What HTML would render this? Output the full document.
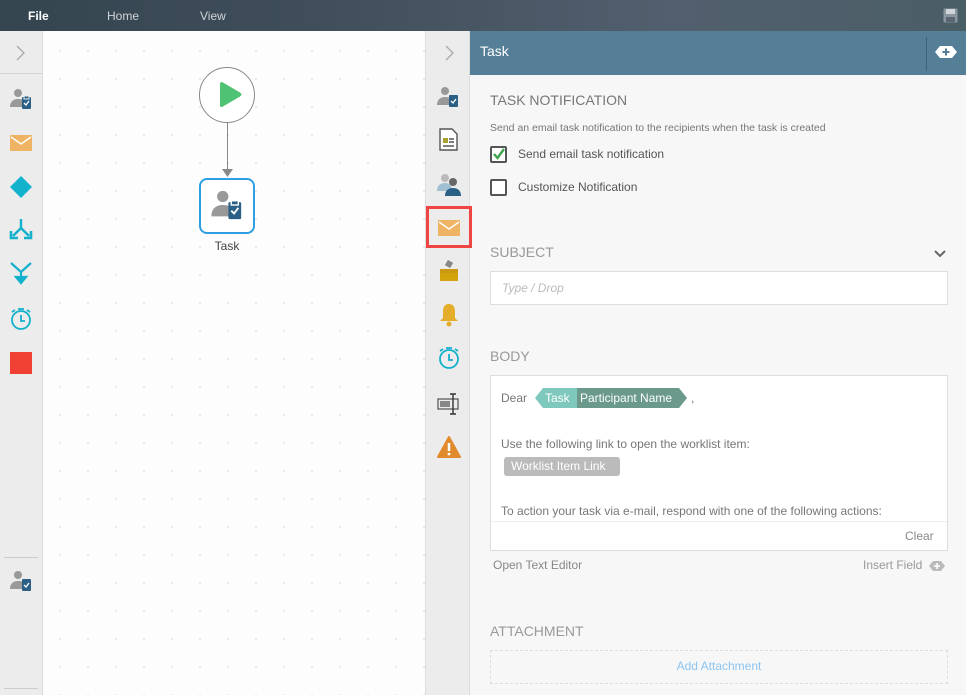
<!DOCTYPE html>
<html><head><style>
*{margin:0;padding:0;box-sizing:border-box}
body{width:966px;height:695px;overflow:hidden;font-family:"Liberation Sans",sans-serif;background:#f7f7f7;position:relative}
.a{position:absolute}
.top{left:0;top:0;width:966px;height:31px;background:linear-gradient(90deg,#34454f 0%,#3f4d5a 30%,#525f6e 70%,#4a5e66 100%)}
.top span{position:absolute;top:9px;font-size:12px;color:#d0d5da}
.lside{left:0;top:31px;width:43px;height:664px;background:#ececec;border-right:1px solid #dcdcdc}
.canvas{left:43px;top:31px;width:382px;height:664px;background-color:#fdfdfd;background-image:radial-gradient(circle,#d2d2d2 0.6px,transparent 0.9px);background-size:28px 28px;background-position:3px 6px}
.rside{left:425px;top:31px;width:45px;height:664px;background:#ececec;border-left:1px solid #ddd;border-right:1px solid #ddd}
.hdr{left:470px;top:31px;width:496px;height:44px;background:#557e97}
.lbl{font-size:14px;color:#8a8a8a;left:490px}
.txt{font-size:12px;color:#777}
.cb{width:17px;height:17px;border:2px solid #555;border-radius:2px;left:490px;background:#fff}
</style></head><body>
<div class="a top"><span style="left:28px;color:#fff;font-weight:bold">File</span><span style="left:107px">Home</span><span style="left:200px">View</span>
<svg class="a" style="left:943px;top:8px" width="15" height="15" viewBox="0 0 15 15"><rect x="0.5" y="0.5" width="14" height="14" rx="1" fill="#8a96a0"/><rect x="3" y="1" width="9" height="5" fill="#cfd5da"/><rect x="3" y="9" width="9" height="5" fill="#5b6670"/></svg></div>

<div class="a lside">
<svg class="a" style="left:15px;top:14px" width="10" height="16"><path d="M2 1l7 7-7 7" stroke="#aaa" fill="none" stroke-width="1.3"/></svg>
<div class="a" style="left:0;top:42px;width:42px;border-top:1px solid #d2d2d2"></div>
<svg class="a" style="left:9px;top:56px" width="24" height="24" viewBox="0 0 24 24"><circle cx="9" cy="6" r="4" fill="#999"/><path d="M1 20c0-6 4-8 8-8s5 1 6 2v6z" fill="#999"/><rect x="13" y="10" width="9" height="12" rx="1" fill="#2a5f86"/><rect x="15" y="9" width="5" height="3" fill="#2a5f86" stroke="#ececec"/><path d="M15 16l2 2 3-4" stroke="#fff" fill="none" stroke-width="1.3"/></svg>
<svg class="a" style="left:10px;top:104px" width="22" height="16"><rect width="22" height="16" rx="1" fill="#eeb463"/><path d="M1 2l10 7 10-7" stroke="#fff" fill="none" stroke-width="1.4"/></svg>
<svg class="a" style="left:9px;top:144px" width="24" height="24"><path d="M12 1l11 11-11 11L1 12z" fill="#12b1cc"/></svg>
<svg class="a" style="left:9px;top:187px" width="24" height="24" viewBox="0 0 24 24" stroke="#12b1cc" stroke-width="2.4" fill="none"><path d="M12 1v9l-8 8M12 10l8 8"/><path d="M2 13v7h7M22 13v7h-7" stroke-width="2.6"/></svg>
<svg class="a" style="left:9px;top:230px" width="24" height="24" viewBox="0 0 24 24" stroke="#12b1cc" stroke-width="2.2" fill="none"><path d="M2 2l10 9 10-9M12 11v8"/><path d="M7 16l5 6 5-6z" fill="#12b1cc"/></svg>
<svg class="a" style="left:9px;top:276px" width="24" height="24" viewBox="0 0 24 24" stroke="#12b1cc" stroke-width="1.8" fill="none"><circle cx="12" cy="13" r="9"/><path d="M12 8v6h4M9 2h6M3 5l3-2M21 5l-3-2"/></svg>
<div class="a" style="left:10px;top:321px;width:22px;height:22px;background:#f04134"></div>
<div class="a" style="left:4px;top:526px;width:34px;border-top:1px solid #ccc"></div>
<svg class="a" style="left:9px;top:538px" width="24" height="24" viewBox="0 0 24 24"><circle cx="9" cy="6" r="4" fill="#999"/><path d="M1 20c0-6 4-8 8-8s5 1 6 2v6z" fill="#999"/><rect x="13" y="10" width="9" height="12" rx="1" fill="#2a5f86"/><path d="M15 16l2 2 3-4" stroke="#fff" fill="none" stroke-width="1.3"/></svg>
<div class="a" style="left:4px;top:657px;width:34px;border-top:1px solid #ccc"></div>
</div>

<div class="a canvas">
<div class="a" style="left:156px;top:36px;width:56px;height:56px;border-radius:50%;border:1px solid #888;background:#fff"></div>
<svg class="a" style="left:174px;top:50px" width="26" height="30"><path d="M3 3q0-3 3-1.5l17 10q3 2 0 4l-17 10q-3 1.5-3-1.5z" fill="#4fc274"/></svg>
<div class="a" style="left:184px;top:92px;width:1px;height:48px;background:#888"></div>
<svg class="a" style="left:179px;top:138px" width="11" height="8"><path d="M0 0h11L5.5 8z" fill="#888"/></svg>
<div class="a" style="left:156px;top:147px;width:56px;height:56px;border-radius:8px;border:2px solid #2f9fe3;background:#fff"></div>
<svg class="a" style="left:167px;top:157px" width="34" height="34" viewBox="0 0 24 24"><circle cx="9" cy="6" r="4" fill="#999"/><path d="M1 20c0-6 4-8 8-8s5 1 6 2v6z" fill="#999"/><rect x="13" y="10" width="9" height="12" rx="1" fill="#2a5f86"/><rect x="15" y="9" width="5" height="3" fill="#2a5f86" stroke="#fff"/><path d="M15 16l2 2 3-4" stroke="#fff" fill="none" stroke-width="1.3"/></svg>
<div class="a" style="left:156px;top:208px;width:56px;text-align:center;font-size:12px;color:#444">Task</div>
</div>

<div class="a rside">
<svg class="a" style="left:18px;top:14px" width="10" height="16"><path d="M2 1l7 7-7 7" stroke="#aaa" fill="none" stroke-width="1.3"/></svg>
<svg class="a" style="left:10px;top:54px" width="24" height="24" viewBox="0 0 24 24"><circle cx="9" cy="6" r="4" fill="#999"/><path d="M1 20c0-6 4-8 8-8s5 1 6 2v6z" fill="#999"/><rect x="13" y="10" width="9" height="12" rx="1" fill="#2a5f86"/><path d="M15 16l2 2 3-4" stroke="#fff" fill="none" stroke-width="1.3"/></svg>
<svg class="a" style="left:13px;top:97px" width="19" height="23"><path d="M1 1h12l5 5v16H1z" fill="#fff" stroke="#555" stroke-width="1.4"/><rect x="4" y="10" width="5" height="5" fill="#a8a030"/><path d="M10 11h5M10 14h5M4 18h11" stroke="#555" stroke-width="1.4"/></svg>
<svg class="a" style="left:10px;top:141px" width="26" height="24" viewBox="0 0 26 24"><circle cx="9" cy="6" r="4" fill="#bbb"/><path d="M1 19c0-6 4-8 8-8s7 2 7 8z" fill="#9fc0d0"/><circle cx="17" cy="10" r="4" fill="#666"/><path d="M9 24c0-6 4-8 8-8s8 2 8 8z" fill="#2a5f86"/></svg>
<div class="a" style="left:0px;top:175px;width:46px;height:42px;border:3px solid #f04545"></div>
<svg class="a" style="left:12px;top:189px" width="22" height="16"><rect width="22" height="16" rx="1" fill="#eeb463"/><path d="M1 2l10 7 10-7" stroke="#fff" fill="none" stroke-width="1.4"/></svg>
<svg class="a" style="left:13px;top:228px" width="20" height="24"><path d="M7 2l6 0 0 6-6 0z" fill="#888" transform="rotate(30 10 5)"/><rect x="1" y="10" width="18" height="4" fill="#c99a10"/><rect x="1" y="14" width="18" height="8" fill="#d4a20c"/></svg>
<svg class="a" style="left:13px;top:272px" width="20" height="24"><path d="M10 1c-5 0-6 4-6 8v6l-3 3h18l-3-3V9c0-4-1-8-6-8z" fill="#e4ae2a"/><circle cx="10" cy="21" r="2.5" fill="#e4ae2a"/></svg>
<svg class="a" style="left:11px;top:315px" width="24" height="24" viewBox="0 0 24 24" stroke="#12b1cc" stroke-width="1.8" fill="none"><circle cx="12" cy="13" r="9"/><path d="M12 8v6h4M9 2h6M3 5l3-2M21 5l-3-2"/></svg>
<svg class="a" style="left:11px;top:362px" width="24" height="22"><rect x="1" y="6" width="20" height="10" fill="none" stroke="#666" stroke-width="1.4"/><rect x="3" y="8" width="10" height="6" fill="#888"/><path d="M16 1v20M13 1h6M13 21h6" stroke="#333" stroke-width="1.4"/></svg>
<svg class="a" style="left:11px;top:405px" width="24" height="22"><path d="M12 1L23 21H1z" fill="#e08a2c" stroke="#e08a2c" stroke-linejoin="round" stroke-width="2"/><path d="M12 7v8" stroke="#fff" stroke-width="2.5"/><circle cx="12" cy="18" r="1.4" fill="#fff"/></svg>
</div>

<div class="a hdr"><span class="a" style="left:10px;top:12px;color:#fff;font-size:14px">Task</span>
<div class="a" style="left:456px;top:6px;width:1px;height:34px;background:#3f6479"></div>
<svg class="a" style="left:464px;top:14px" width="24" height="14"><path d="M6 1h12l5 6-5 6H6L1 7z" fill="#fff"/><path d="M12 3.5v7M8.5 7h7" stroke="#557e97" stroke-width="2"/></svg></div>

<div class="a lbl" style="top:92px;color:#777">TASK NOTIFICATION</div>
<div class="a" style="left:490px;top:122px;font-size:10.5px;color:#777">Send an email task notification to the recipients when the task is created</div>
<div class="a cb" style="top:146px"></div>
<svg class="a" style="left:492px;top:147px" width="14" height="14"><path d="M2 7l3.5 4L12 2" stroke="#3fa34d" stroke-width="2.4" fill="none"/></svg>
<div class="a txt" style="left:518px;top:147px;color:#555">Send email task notification</div>
<div class="a cb" style="top:179px"></div>
<div class="a txt" style="left:518px;top:180px;color:#555">Customize Notification</div>

<div class="a lbl" style="top:244px;color:#999">SUBJECT</div>
<svg class="a" style="left:933px;top:250px" width="14" height="9"><path d="M2 1l5 5 5-5" stroke="#666" stroke-width="2" fill="none"/></svg>
<div class="a" style="left:490px;top:271px;width:458px;height:34px;background:#fff;border:1px solid #ddd"></div>
<div class="a" style="left:502px;top:281px;font-size:12px;color:#bbb;font-style:italic">Type / Drop</div>

<div class="a lbl" style="top:348px;color:#999">BODY</div>
<div class="a" style="left:490px;top:375px;width:458px;height:176px;background:#fff;border:1px solid #ddd">
<div class="a" style="left:0;top:145px;width:456px;border-top:1px solid #eee"></div>
<div class="a txt" style="left:10px;top:15px">Dear</div>
<svg class="a" style="left:44px;top:12px" width="155" height="20"><path d="M0 10L8 0h34v20H8z" fill="#7fc8bd"/><path d="M42 0h102l8 10-8 10H42z" fill="#6b9a8c"/></svg>
<div class="a" style="left:54px;top:15px;font-size:12px;color:#fff">Task</div>
<div class="a" style="left:89px;top:15px;font-size:12px;color:#fff">Participant Name</div>
<div class="a txt" style="left:200px;top:15px">,</div>
<div class="a txt" style="left:10px;top:61px">Use the following link to open the worklist item:</div>
<div class="a" style="left:13px;top:81px;width:116px;height:19px;background:#bbb;border-radius:3px;color:#fff;font-size:12px;padding:2px 7px">Worklist Item Link</div>
<div class="a txt" style="left:10px;top:128px">To action your task via e-mail, respond with one of the following actions:</div>
<div class="a txt" style="left:414px;top:153px;color:#888">Clear</div>
</div>
<div class="a txt" style="left:493px;top:558px;color:#888">Open Text Editor</div>
<div class="a txt" style="left:863px;top:558px;color:#999">Insert Field</div>
<svg class="a" style="left:929px;top:561px" width="16" height="10"><path d="M4 0h8l4 5-4 5H4L0 5z" fill="#bbb"/><path d="M8 2v6M5 5h6" stroke="#fff" stroke-width="1.5"/></svg>
<div class="a lbl" style="top:623px;color:#999">ATTACHMENT</div>
<div class="a" style="left:490px;top:650px;width:458px;height:34px;border:1px dashed #ddd"></div>
<div class="a" style="left:490px;top:659px;width:458px;text-align:center;font-size:12px;color:#8cc4ef">Add Attachment</div>
</body></html>
